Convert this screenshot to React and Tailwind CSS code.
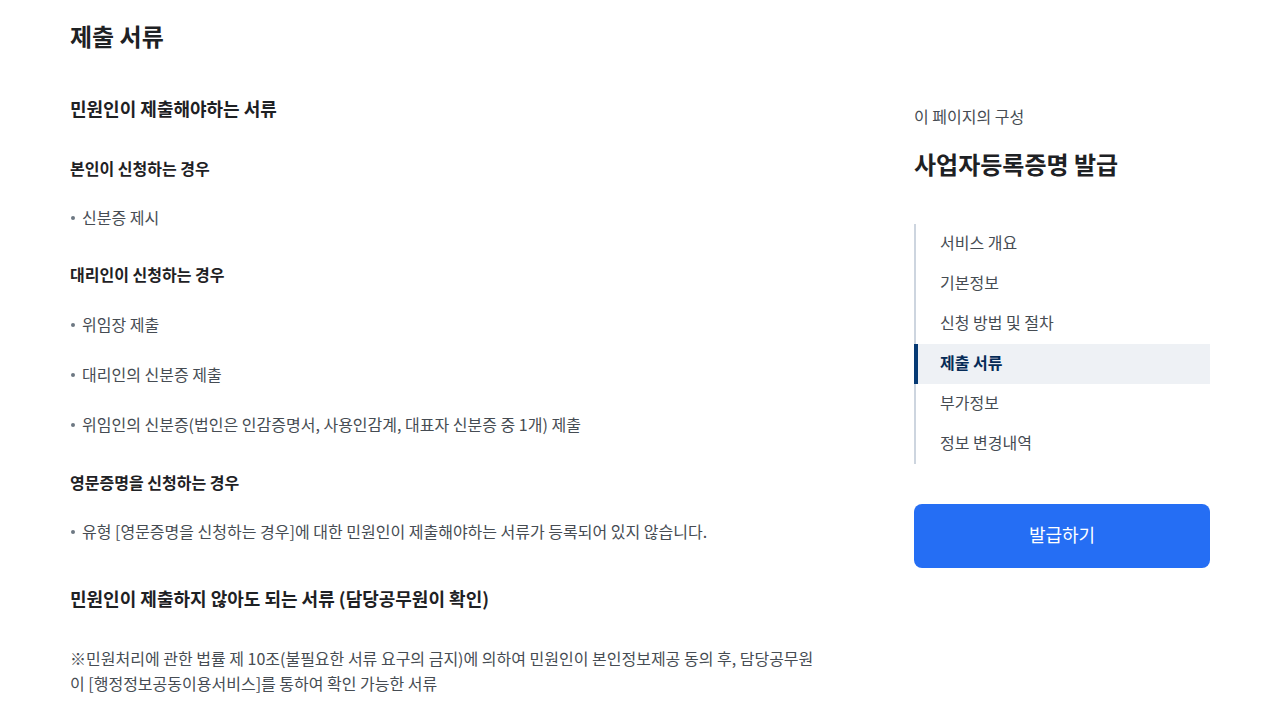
import React from 'react'

const font = { fontFamily: '"Noto Sans CJK KR", "Noto Sans", sans-serif' };

const navItems = ['서비스 개요', '기본정보', '신청 방법 및 절차', '제출 서류', '부가정보', '정보 변경내역'];

const Bullet = ({ children, className = '' }) => (
  <div className={`flex items-start text-[16px] leading-6 text-[#464c53] ${className}`}>
    <span className="mt-[11px] mr-[7px] ml-[1px] h-[4px] w-[4px] shrink-0 rounded-full bg-[#6d7882]" />
    <span>{children}</span>
  </div>
);

const SubTitle = ({ children, className = '' }) => (
  <h4 className={`text-[16px] leading-6 font-bold text-[#1e2124] ${className}`}>{children}</h4>
);

const App = () => {
  return (
    <div style={font} className="w-[1280px] h-[720px] overflow-hidden bg-white flex">
      <div className="ml-[70px] w-[755px] pt-[20px]">
        <h2 className="text-[24px] leading-8 font-bold text-[#1e2124]">제출 서류</h2>

        <h3 className="mt-[42px] text-[18px] leading-7 font-bold text-[#1e2124]">민원인이 제출해야하는 서류</h3>

        <SubTitle className="mt-[34px]">본인이 신청하는 경우</SubTitle>
        <Bullet className="mt-[25px]">신분증 제시</Bullet>

        <SubTitle className="mt-[33px]">대리인이 신청하는 경우</SubTitle>
        <Bullet className="mt-[26px]">위임장 제출</Bullet>
        <Bullet className="mt-[26px]">대리인의 신분증 제출</Bullet>
        <Bullet className="mt-[26px]">위임인의 신분증(법인은 인감증명서, 사용인감계, 대표자 신분증 중 1개) 제출</Bullet>

        <SubTitle className="mt-[34px]">영문증명을 신청하는 경우</SubTitle>
        <Bullet className="mt-[25px]">유형 [영문증명을 신청하는 경우]에 대한 민원인이 제출해야하는 서류가 등록되어 있지 않습니다.</Bullet>

        <h3 className="mt-[41px] text-[18px] leading-7 font-bold text-[#1e2124]">민원인이 제출하지 않아도 되는 서류 (담당공무원이 확인)</h3>

        <p className="mt-[34px] break-all text-[16px] leading-[25px] text-[#464c53]">
          ※민원처리에 관한 법률 제 10조(불필요한 서류 요구의 금지)에 의하여 민원인이 본인정보제공 동의 후, 담당공무원이 [행정정보공동이용서비스]를 통하여 확인 가능한 서류
        </p>
      </div>

      <aside className="ml-[89px] w-[296px] pt-[105px]">
        <p className="text-[16px] leading-[22px] text-[#464c53]">이 페이지의 구성</p>
        <h3 className="mt-[22px] text-[24px] leading-[30px] font-bold text-[#1e2124]">사업자등록증명 발급</h3>

        <ul className="mt-[45px] border-l-2 border-[#cdd5df]">
          {navItems.map(item => {
            const active = item === '제출 서류';
            return (
              <li
                key={item}
                className={
                  active
                    ? '-ml-[2px] h-10 flex items-center pl-[22px] pb-1 bg-[#eef1f5] border-l-4 border-[#063a74] text-[16px] font-bold text-[#052b57]'
                    : 'h-10 flex items-center pl-6 pb-1 text-[16px] text-[#464c53]'
                }
              >
                {item}
              </li>
            );
          })}
        </ul>

        <button className="mt-10 h-16 w-full pb-1 rounded-lg bg-[#256ef4] text-[18px] text-white">
          발급하기
        </button>
      </aside>
    </div>
  )
}

export default App;
